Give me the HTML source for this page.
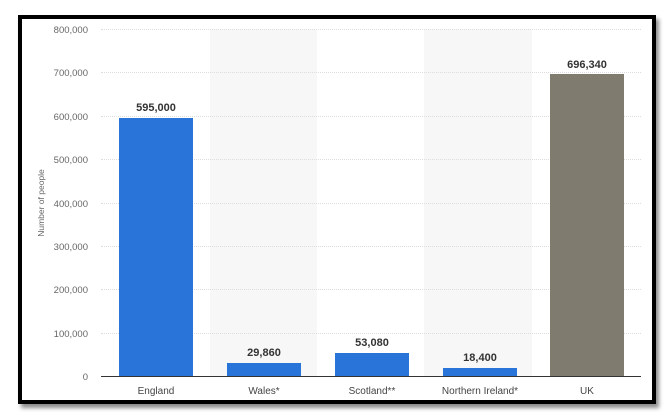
<!DOCTYPE html>
<html><head><style>
body{margin:0;width:668px;height:416px;background:#fff;position:relative;overflow:hidden;font-family:"Liberation Sans",sans-serif}
.frame{position:absolute;left:18px;top:15px;width:630px;height:381px;border:4px solid #000;box-shadow:3px 4px 4px rgba(0,0,0,.45);background:#fff}
.a{position:absolute}
.yl{position:absolute;font-size:9.5px;color:#666;text-align:right;width:60px}
.g{position:absolute;left:101px;width:540px;height:0;border-top:1px dotted #ddd}
.band{position:absolute;top:29px;height:347px;background:#f7f7f7}
.bar{position:absolute;background:#2874d9}
.v{position:absolute;font-size:11px;font-weight:bold;color:#333;width:100px;text-align:center}
.x{position:absolute;top:386px;font-size:10px;color:#444;width:108px;text-align:center}
</style></head><body>
<div class="frame"></div>
<div class="band" style="left:210px;width:107px"></div>
<div class="band" style="left:424px;width:108px"></div>
<div class="g" style="top:29px"></div><div class="g" style="top:72px"></div><div class="g" style="top:116px"></div><div class="g" style="top:159px"></div><div class="g" style="top:203px"></div><div class="g" style="top:246px"></div><div class="g" style="top:289px"></div><div class="g" style="top:333px"></div>
<div class="yl" style="top:25px;left:28px">800,000</div>
<div class="yl" style="top:68px;left:28px">700,000</div>
<div class="yl" style="top:112px;left:28px">600,000</div>
<div class="yl" style="top:155px;left:28px">500,000</div>
<div class="yl" style="top:199px;left:28px">400,000</div>
<div class="yl" style="top:242px;left:28px">300,000</div>
<div class="yl" style="top:285px;left:28px">200,000</div>
<div class="yl" style="top:329px;left:28px">100,000</div>
<div class="yl" style="top:372px;left:28px">0</div>
<div class="a" style="left:-4px;top:198px;width:90px;font-size:8.5px;color:#666;transform:rotate(-90deg);text-align:center">Number of people</div>
<div class="bar" style="left:119px;top:118px;width:74px;height:258px"></div>
<div class="bar" style="left:227px;top:363px;width:74px;height:13px"></div>
<div class="bar" style="left:335px;top:353px;width:74px;height:23px"></div>
<div class="bar" style="left:443px;top:368px;width:74px;height:8px"></div>
<div class="bar" style="left:550px;top:74px;width:74px;height:302px;background:#7f7b6e"></div>
<div class="a" style="left:101px;top:376px;width:540px;height:1px;background:#333"></div>
<div class="v" style="left:106px;top:102px">595,000</div>
<div class="v" style="left:214px;top:347px">29,860</div>
<div class="v" style="left:322px;top:337px">53,080</div>
<div class="v" style="left:430px;top:352px">18,400</div>
<div class="v" style="left:537px;top:59px">696,340</div>
<div class="x" style="left:102px">England</div>
<div class="x" style="left:210px">Wales*</div>
<div class="x" style="left:318px">Scotland**</div>
<div class="x" style="left:426px">Northern Ireland*</div>
<div class="x" style="left:533px">UK</div>
</body></html>
